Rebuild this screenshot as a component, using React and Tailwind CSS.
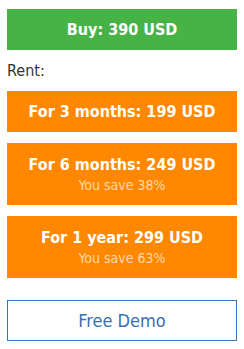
export default function App() {
  return (
    <div className="w-[244px] h-[349px] bg-white px-[7px] pt-[9px] font-['DejaVu_Sans_Condensed','DejaVu_Sans',sans-serif]">
      <div className="h-[41px] bg-[#47b347] text-white font-bold text-[16px] flex items-center justify-center">
        Buy: 390 USD
      </div>
      <div className="h-[41px] flex items-center text-[16px] text-[#333]">Rent:</div>
      <div className="flex flex-col gap-[11px]">
        <div className="h-[41px] bg-[#ff8800] text-white font-bold text-[16px] flex items-center justify-center">
          For 3 months: 199 USD
        </div>
        <div className="h-[62px] bg-[#ff8800] flex flex-col items-center justify-center">
          <span className="text-white font-bold text-[16px] leading-[22px]">For 6 months: 249 USD</span>
          <span className="text-[#ffd8a8] text-[14px] leading-[18px]">You save 38%</span>
        </div>
        <div className="h-[62px] bg-[#ff8800] flex flex-col items-center justify-center">
          <span className="text-white font-bold text-[16px] leading-[22px]">For 1 year: 299 USD</span>
          <span className="text-[#ffd8a8] text-[14px] leading-[18px]">You save 63%</span>
        </div>
      </div>
      <div className="mt-[22px] h-[41px] border border-[#3a72b8] text-[#3a6fb0] text-[18px] flex items-center justify-center">
        Free Demo
      </div>
    </div>
  );
}
